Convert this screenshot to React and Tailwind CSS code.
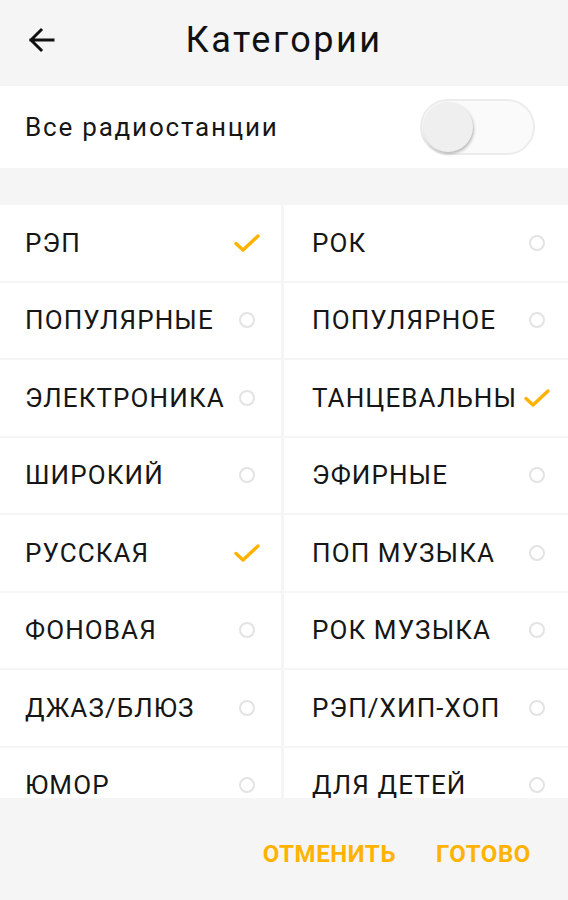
import React, { useState } from 'react';

const categories = [
    { left: { name: 'РЭП', on: true }, right: { name: 'РОК', on: false } },
    { left: { name: 'ПОПУЛЯРНЫЕ', on: false }, right: { name: 'ПОПУЛЯРНОЕ', on: false } },
    { left: { name: 'ЭЛЕКТРОНИКА', on: false }, right: { name: 'ТАНЦЕВАЛЬНЫ', on: true } },
    { left: { name: 'ШИРОКИЙ', on: false }, right: { name: 'ЭФИРНЫЕ', on: false } },
    { left: { name: 'РУССКАЯ', on: true }, right: { name: 'ПОП МУЗЫКА', on: false } },
    { left: { name: 'ФОНОВАЯ', on: false }, right: { name: 'РОК МУЗЫКА', on: false } },
    { left: { name: 'ДЖАЗ/БЛЮЗ', on: false }, right: { name: 'РЭП/ХИП-ХОП', on: false } },
    { left: { name: 'ЮМОР', on: false }, right: { name: 'ДЛЯ ДЕТЕЙ', on: false } },
];

const Check = () => (
    <svg width="28" height="22" viewBox="0 0 28 22" fill="none">
        <path d="M3 11.5 L10 18 L25 4" stroke="#ffb300" strokeWidth="3.4" strokeLinecap="round" strokeLinejoin="round" />
    </svg>
);

const Dot = () => (
    <span className="block w-[16px] h-[16px] rounded-full border-[2.5px] border-[#e3e3e3]"></span>
);

const Cell = ({ item, side }) => (
    <div
        className={`flex items-center justify-between bg-white h-[75.5px] ${
            side === 'left' ? 'pl-[25px] pr-[20px]' : 'pl-[28px] pr-[17px]'
        }`}
    >
        <span className="text-[26px] leading-none text-[#161616] tracking-[1.1px] whitespace-nowrap">{item.name}</span>
        <span className="w-[28px] shrink-0 flex items-center justify-center">
            {item.on ? <Check /> : <Dot />}
        </span>
    </div>
);

const App = () => {
    const [all, setAll] = useState(false);

    return (
        <div
            className="h-[900px] w-full flex flex-col bg-[#f5f5f5] overflow-hidden"
            style={{ fontFamily: 'Roboto, "Noto Sans", sans-serif' }}
        >
            {/* Header */}
            <div className="h-[86px] flex items-center relative shrink-0 pb-[6px]">
                <button className="ml-[25px] w-[32px] h-[32px] flex items-center justify-center">
                    <svg width="30" height="30" viewBox="0 0 30 30" fill="none">
                        <path d="M27 15 H5 M15 5 L5 15 L15 25" stroke="#111" strokeWidth="3" strokeLinecap="square" />
                    </svg>
                </button>
                <h1 className="absolute left-0 right-0 text-center text-[36px] tracking-[2.5px] text-[#111] pointer-events-none">
                    Категории
                </h1>
            </div>

            {/* All stations */}
            <div className="h-[82px] bg-white flex items-center justify-between pl-[25px] pr-[33px] shrink-0">
                <span className="text-[26px] tracking-[1.8px] text-[#161616]">Все радиостанции</span>
                <button
                    onClick={() => setAll(!all)}
                    className="w-[115px] h-[56px] rounded-full bg-[#fafafa] border-[2px] border-[#ececec] flex items-center px-[1px]"
                >
                    <span className="block w-[50px] h-[50px] rounded-full bg-[#efefef] shadow-[1px_2px_3px_rgba(0,0,0,0.25)]"></span>
                </button>
            </div>

            <div className="h-[37px] shrink-0"></div>

            {/* Grid */}
            <div className="flex-1 overflow-hidden">
                <div className="grid grid-cols-[281px_1fr] gap-x-[3px] gap-y-[2px]">
                    {categories.map((row, i) => (
                        <React.Fragment key={i}>
                            <Cell item={row.left} side="left" />
                            <Cell item={row.right} side="right" />
                        </React.Fragment>
                    ))}
                </div>
            </div>

            {/* Footer */}
            <div className="h-[102px] shrink-0 flex items-center justify-end pr-[37px] pt-[10px] gap-[40px]">
                <button className="text-[24px] font-bold text-[#ffb300] tracking-[0.6px]">ОТМЕНИТЬ</button>
                <button className="text-[24px] font-bold text-[#ffb300] tracking-[0.6px]">ГОТОВО</button>
            </div>
        </div>
    );
};

export default App;
